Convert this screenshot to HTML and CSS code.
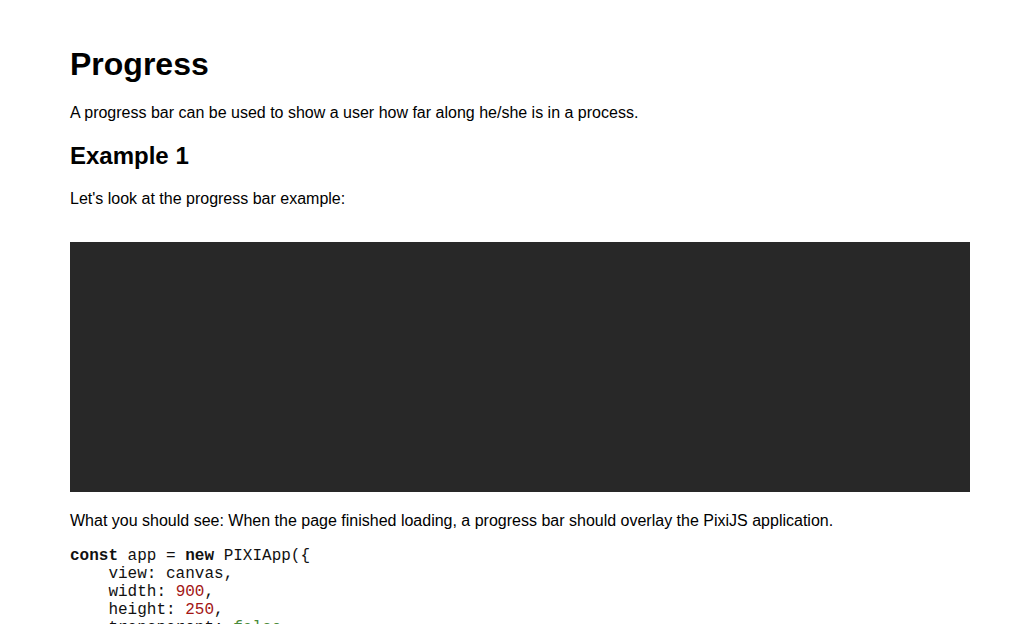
FILE: index.html
```html
<!DOCTYPE html>
<html lang="en">
<head>
<meta charset="utf-8">
<title>Progress</title>
<link rel="stylesheet" href="styles.css">
</head>
<body>
<main class="page">
  <h1 class="title">Progress</h1>
  <p class="text">A progress bar can be used to show a user how far along he/she is in a process.</p>
  <h2 class="subtitle">Example 1</h2>
  <p class="text">Let's look at the progress bar example:</p>
  <div class="stage"></div>
  <p class="text">What you should see: When the page finished loading, a progress bar should overlay the PixiJS application.</p>
<pre class="code"><span class="kw">const</span> app = <span class="kw">new</span> PIXIApp({
    view: canvas,
    width: <span class="num">900</span>,
    height: <span class="num">250</span>,
    transparent: <span class="bool">false</span>,
    backgroundColor: <span class="num">0x282828</span>
}).setup().run()</pre>
</main>
</body>
</html>
```
FILE: styles.css
```css
html, body {
  margin: 0;
  background: #ffffff;
}
body {
  font-family: "Liberation Sans", Arial, sans-serif;
  color: #000000;
  font-size: 16px;
}
.page {
  padding: 24.5px 54px 0 70px;
}
.title {
  font-size: 32px;
  font-weight: bold;
  margin: 21.44px 0 21.44px;
}
.subtitle {
  font-size: 24px;
  font-weight: bold;
  margin: 19.92px 0;
}
.text {
  margin: 16px 0;
}
.stage {
  width: 900px;
  height: 250px;
  background: #282828;
  margin: 33.4px 0 20px;
}
.code {
  font-family: "Liberation Mono", "Courier New", monospace;
  font-size: 16px;
  line-height: 18px;
  margin: 17px 0;
  color: #111111;
}
.kw {
  font-weight: bold;
}
.num {
  color: #a31515;
}
.bool {
  color: #4a8a3a;
}
```
